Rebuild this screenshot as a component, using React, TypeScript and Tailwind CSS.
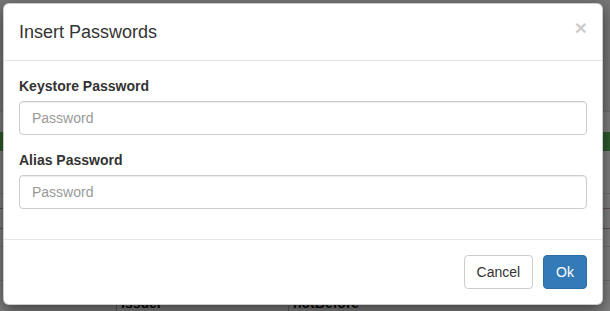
import React from 'react';

function Field({ label }: { label: string }) {
  return (
    <div className="mb-[15px]">
      <label className="mb-[5px] block text-[14px] font-bold leading-[20px] text-[#333]">{label}</label>
      <input
        type="password"
        placeholder="Password"
        className="block h-[34px] w-full rounded-[4px] border border-[#ccc] bg-white px-[12px] py-[6px] text-[14px] text-[#555] shadow-[inset_0_1px_1px_rgba(0,0,0,0.075)] outline-none placeholder:text-[#999]"
      />
    </div>
  );
}

export default function App() {
  return (
    <div className="relative h-[311px] w-[610px] overflow-hidden bg-[#f0f0f0] font-['Liberation_Sans',Arial,sans-serif]">
      {/* page behind the modal */}
      <div className="flex h-full flex-col">
        <div className="h-[113px] border-b border-[#ddd] bg-[#eee]" />
        <div className="h-[20px] bg-white" />
        <div className="h-[19px] bg-[#5cb85c]" />
        <div className="h-[43px] border-b border-[#ddd] bg-white" />
        <div className="h-[15px] border-b border-[#c9a0a0] bg-white" />
        <div className="h-[21px] border-b border-[#c9a0a0] bg-white" />
        <div className="h-[18px] border-b border-[#ddd] bg-white" />
        <div className="h-[34px] border-b border-[#ddd] bg-white" />
        <div className="flex h-[30px] items-start bg-white text-[14px] font-bold text-[#111]">
          <div className="w-[116px] pt-[14px] pr-[5px] text-right text-[9px] text-[#444]">▼</div>
          <div className="h-full w-[160px] border-l border-[#bbb] pl-[4px] pt-[12px]">Issuer</div>
          <div className="w-[12px] pt-[14px] text-[9px] text-[#444]">▼</div>
          <div className="h-full border-l border-[#bbb] pl-[4px] pt-[12px]">notBefore</div>
        </div>
      </div>

      {/* backdrop */}
      <div className="absolute inset-0 bg-black/50" />

      {/* modal */}
      <div className="absolute left-[3px] top-[3px] w-[600px] rounded-[6px] border border-black/20 bg-white shadow-[0_5px_15px_rgba(0,0,0,0.5)]">
        <div className="flex items-start justify-between border-b border-[#e5e5e5] p-[15px]">
          <h4 className="text-[18px] leading-[26px] text-[#333]">Insert Passwords</h4>
          <button className="-mt-[2px] text-[21px] font-bold leading-[21px] text-black opacity-20">×</button>
        </div>
        <div className="p-[15px]">
          <Field label="Keystore Password" />
          <Field label="Alias Password" />
        </div>
        <div className="flex justify-end gap-[10px] border-t border-[#e5e5e5] p-[15px]">
          <button className="h-[34px] rounded-[4px] border border-[#ccc] bg-white px-[12px] text-[14px] text-[#333]">Cancel</button>
          <button className="h-[34px] rounded-[4px] border border-[#2e6da4] bg-[#337ab7] px-[12px] text-[14px] text-white">Ok</button>
        </div>
      </div>
    </div>
  );
}
